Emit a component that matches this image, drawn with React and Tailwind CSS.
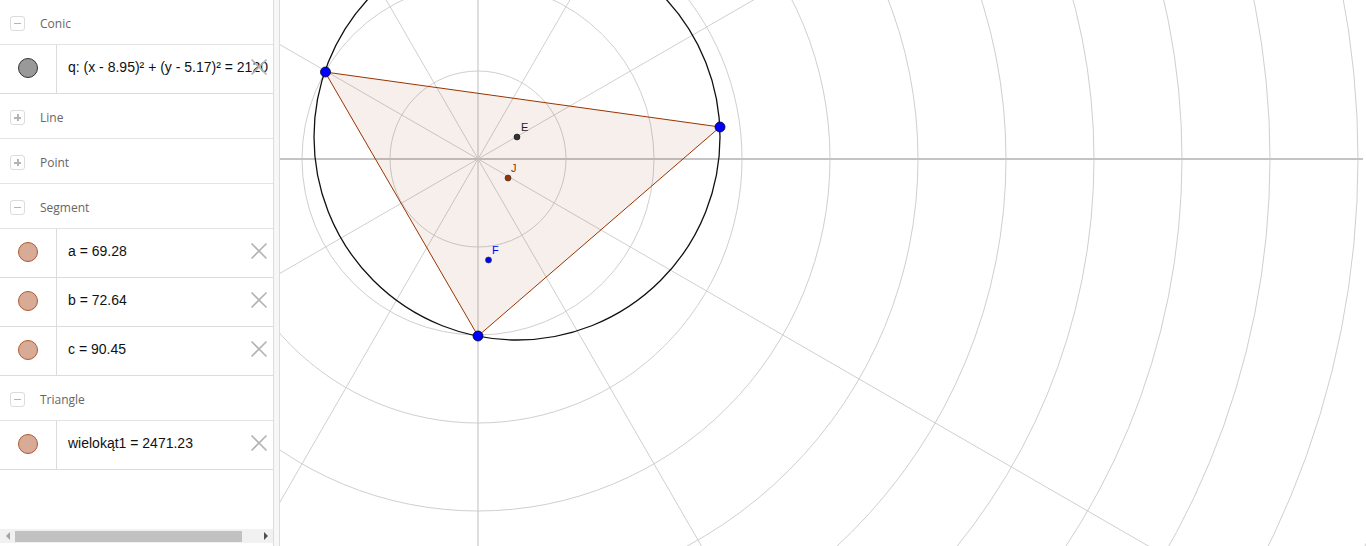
import React from "react";

const headerFont = { fontFamily: '"Open Sans", "Liberation Sans", sans-serif' };
const mathFont = { fontFamily: '"Liberation Sans", Arial, sans-serif' };

function Toggle({ open }) {
  return (
    <div className="ml-[10px] flex h-[15px] w-[15px] items-center justify-center rounded-[3px] border border-[#dcdcdc] bg-white">
      {open ? (
        <div className="h-[1.5px] w-[7px] bg-[#b4b4b4]" />
      ) : (
        <div className="relative h-[7px] w-[7px]">
          <div className="absolute left-0 top-[3px] h-[1.5px] w-[7px] bg-[#b4b4b4]" />
          <div className="absolute left-[3px] top-0 h-[7px] w-[1.5px] bg-[#b4b4b4]" />
        </div>
      )}
    </div>
  );
}

function Header({ label, open }) {
  return (
    <div className="flex h-[45px] shrink-0 items-center border-b border-[#e4e4e4] pt-[3px]">
      <Toggle open={open} />
      <span className="ml-[15px] text-[12px] text-[#666666]" style={headerFont}>
        {label}
      </span>
    </div>
  );
}

function XIcon() {
  return (
    <svg width="18" height="18" viewBox="0 0 18 18" className="absolute right-[5px] top-[13px]">
      <path d="M1.5 1.5 L16.5 16.5 M16.5 1.5 L1.5 16.5" stroke="#b3b3b3" strokeWidth="1.6" fill="none" />
    </svg>
  );
}

function Item({ text, gray }) {
  return (
    <div className="relative flex h-[49px] shrink-0 border-b border-[#dcdcdc]">
      <div className="flex w-[57px] shrink-0 items-center justify-center border-r border-[#dcdcdc] pb-[3px]">
        <div
          className={
            gray
              ? "h-[20px] w-[20px] rounded-full border border-[#333333] bg-[#999999]"
              : "h-[20px] w-[20px] rounded-full border border-[#b0592d] bg-[#d8ab97]"
          }
        />
      </div>
      <div className="flex flex-1 items-center overflow-hidden whitespace-nowrap pb-[3px] pl-[11px] text-[14px] text-[#111111]" style={mathFont}>
        {text}
      </div>
      <XIcon />
    </div>
  );
}

function Graphics() {
  const cx = 478;
  const cy = 159;
  const rings = [];
  for (let n = 1; n <= 12; n++) rings.push(n * 88);
  const rays = [];
  for (let k = 0; k < 12; k++) {
    if (k % 3 === 0) continue;
    const a = (k * 30 * Math.PI) / 180;
    rays.push([cx + 2000 * Math.cos(a), cy + 2000 * Math.sin(a)]);
  }
  return (
    <svg className="block h-full w-full" viewBox="280 0 1086 546" preserveAspectRatio="none">
      <rect x="280" y="0" width="1086" height="546" fill="#ffffff" />
      {rings.map((r) => (
        <circle key={r} cx={cx} cy={cy} r={r} fill="none" stroke="#cfcfcf" strokeWidth="1" />
      ))}
      {rays.map(([x, y], i) => (
        <line key={i} x1={cx} y1={cy} x2={x} y2={y} stroke="#cfcfcf" strokeWidth="1" />
      ))}
      <line x1="280" y1={cy} x2="1363" y2={cy} stroke="#c4c4c4" strokeWidth="2" />
      <line x1={cx} y1="0" x2={cx} y2="546" stroke="#c8c8c8" strokeWidth="1.2" />
      <polygon
        points="325,72 720,127 478,336"
        fill="#993300"
        fillOpacity="0.08"
        stroke="#993300"
        strokeWidth="1"
      />
      <circle cx="517" cy="137" r="203" fill="none" stroke="#111111" strokeWidth="1.3" />
      <circle cx="517" cy="137" r="3" fill="#333333" stroke="#000" strokeWidth="0.5" />
      <circle cx="508" cy="178" r="3" fill="#993300" stroke="#333" strokeWidth="0.7" />
      <circle cx="488.5" cy="260" r="3" fill="#0000ff" stroke="#333" strokeWidth="0.7" />
      <text x="521" y="131" fontSize="11" fill="#222222" style={mathFont}>E</text>
      <text x="511" y="172" fontSize="11" fill="#993300" style={mathFont}>J</text>
      <text x="492" y="254" fontSize="11" fill="#0000ff" style={mathFont}>F</text>
      <circle cx="325.5" cy="72" r="5" fill="#0000ff" stroke="#000033" strokeWidth="0.8" />
      <circle cx="720" cy="127" r="5" fill="#0000ff" stroke="#000033" strokeWidth="0.8" />
      <circle cx="478" cy="336" r="5" fill="#0000ff" stroke="#000033" strokeWidth="0.8" />
    </svg>
  );
}

export default function App() {
  return (
    <div className="flex h-[546px] w-[1366px] overflow-hidden bg-white">
      <div className="relative flex h-full w-[273px] shrink-0 flex-col">
        <Header label="Conic" open />
        <Item text="q: (x - 8.95)² + (y - 5.17)² = 2120" gray />
        <Header label="Line" />
        <Header label="Point" />
        <Header label="Segment" open />
        <Item text="a = 69.28" />
        <Item text="b = 72.64" />
        <Item text="c = 90.45" />
        <Header label="Triangle" open />
        <Item text="wielokąt1 = 2471.23" />
        <div className="flex-1" />
        <div className="mb-[3px] flex h-[14px] items-center bg-[#f1f1f1]">
          <div className="flex w-[15px] items-center justify-center">
            <div className="h-0 w-0 border-y-[4px] border-r-[4px] border-y-transparent border-r-[#a3a3a3]" />
          </div>
          <div className="h-[11px] w-[227px] bg-[#c1c1c1]" />
          <div className="flex-1" />
          <div className="flex w-[15px] items-center justify-center">
            <div className="h-0 w-0 border-y-[4px] border-l-[4px] border-y-transparent border-l-[#505050]" />
          </div>
        </div>
      </div>
      <div className="h-full w-[7px] shrink-0 border-x border-[#dcdcdc] bg-[#f7f7f7]" />
      <div className="h-full flex-1">
        <Graphics />
      </div>
    </div>
  );
}
